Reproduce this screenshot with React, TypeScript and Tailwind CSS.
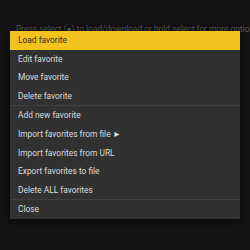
const items: (string | null)[] = [
  "Load favorite",
  "Edit favorite",
  "Move favorite",
  "Delete favorite",
  null,
  "Add new favorite",
  "Import favorites from file ►",
  "Import favorites from URL",
  "Export favorites to file",
  "Delete ALL favorites",
  null,
  "Close",
];

export default function App() {
  return (
    <div
      className="relative w-[250px] h-[250px] overflow-hidden bg-[#131313]"
      style={{ fontFamily: "Roboto, 'Liberation Sans', sans-serif" }}
    >
      <div className="pt-[23px] pl-[16px] whitespace-nowrap text-[8.4px] text-[#5c5c5c]">
        Press select (●) to load/download or hold select for more options
      </div>

      {/* popup menu */}
      <div className="absolute left-[10px] top-[31px] w-[230px] flex flex-col bg-[#313131] shadow-[0_2px_10px_rgba(0,0,0,0.7)]">
        {items.map((label, i) =>
          label === null ? (
            <div key={i} className="h-px bg-[#414141]" />
          ) : (
            <div
              key={i}
              className={`h-[18.6px] flex items-center pl-[8px] text-[8.4px] whitespace-nowrap ${
                i === 0 ? "bg-[#f2c21f] text-[#2b2b2b]" : "text-[#dcdcdc]"
              }`}
            >
              {label}
            </div>
          )
        )}
      </div>
    </div>
  );
}
